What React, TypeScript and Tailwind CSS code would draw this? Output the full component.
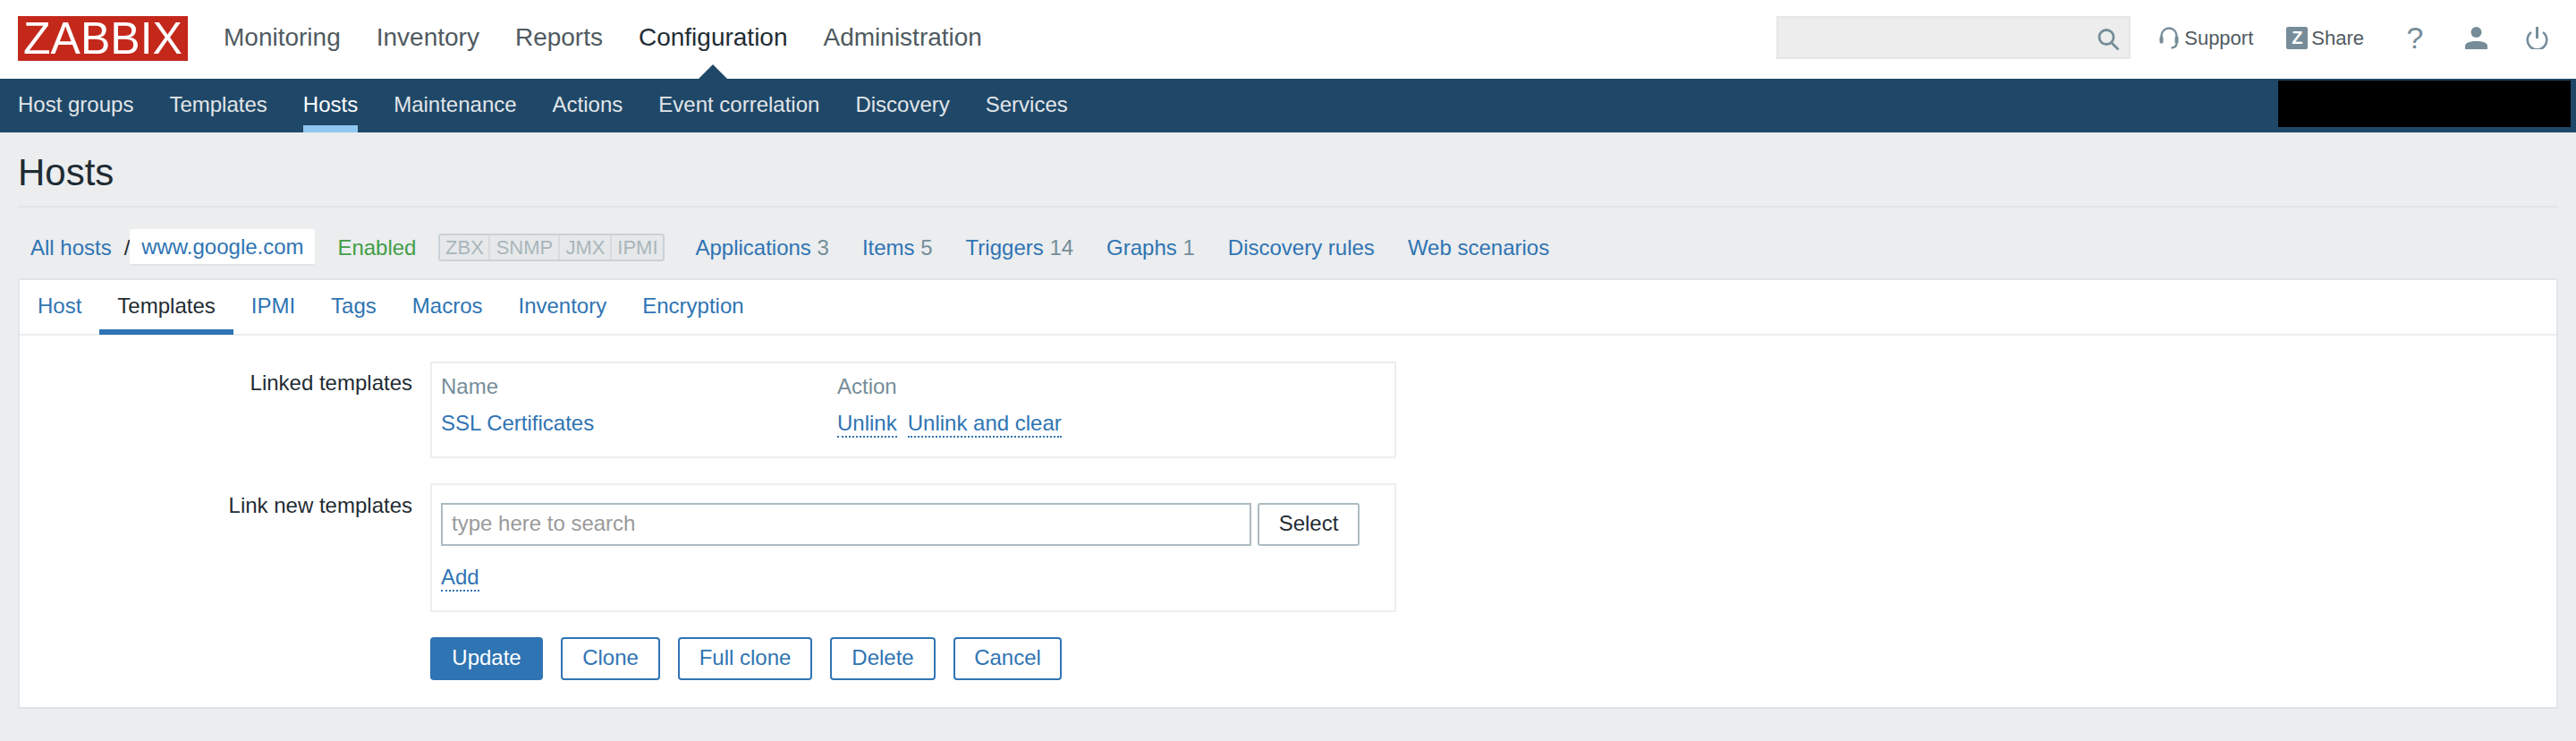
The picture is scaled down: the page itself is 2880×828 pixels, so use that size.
import React from "react";

function DotLink({ children }: { children: React.ReactNode }) {
  return (
    <a className="text-[#2f74b3] border-b-2 border-dotted border-[#2f74b3] leading-[28px] block">{children}</a>
  );
}

function Btn({ w, children }: { w: string; children: React.ReactNode }) {
  return (
    <button className={`${w} h-12 border-2 border-[#2f74b3] rounded-[4px] text-[#2f74b3] bg-white text-center pb-[2px]`}>{children}</button>
  );
}

export default function App() {
  const top = [
    ["Monitoring", false],
    ["Inventory", false],
    ["Reports", false],
    ["Configuration", true],
    ["Administration", false],
  ] as const;
  const sub = ["Host groups", "Templates", "Hosts", "Maintenance", "Actions", "Event correlation", "Discovery", "Services"];
  const tabs = ["Host", "Templates", "IPMI", "Tags", "Macros", "Inventory", "Encryption"];
  return (
    <div className="w-[2880px] h-[828px] bg-[#ebedef] text-[24px] text-[#1f2c33] overflow-hidden font-['Liberation_Sans',Arial,sans-serif]">
      {/* top header */}
      <header className="h-[88px] bg-white flex items-start relative">
        <div className="ml-5 mt-[18px] w-[190px] h-[50px] bg-[#c4281b] text-white text-[50px] leading-[50px] text-center font-normal">ZABBIX</div>
        <nav className="flex ml-10 gap-10 mt-[23px] text-[28px] leading-[38px] text-[#4f5a60]">
          {top.map(([t, a]) => (
            <div key={t} className={`relative ${a ? "text-[#1f2c33]" : ""}`}>
              {t}
              {a && (
                <svg className="absolute left-1/2 -translate-x-1/2 top-[49px]" width="32" height="16" viewBox="0 0 32 16">
                  <path d="M16 0 L32 16 H0 Z" fill="#1f4868" />
                </svg>
              )}
            </div>
          ))}
        </nav>
        <div className="ml-auto flex items-start">
          <div className="mt-[18px] w-[396px] h-12 bg-[#ededed] border-2 border-[#e6e6e6] relative">
            <svg className="absolute right-[10px] top-[12px]" width="25" height="24" viewBox="0 0 25 24" fill="none" stroke="#768d99" strokeWidth="2.8">
              <circle cx="10" cy="9.5" r="8" />
              <path d="M15.5 15.5 L23.5 23.5" />
            </svg>
          </div>
          <div className="ml-[32px] mt-[30px] flex items-center text-[22px] leading-[25px] text-[#4f5a60]">
            <svg width="22" height="25" viewBox="0 0 22 25" fill="none" stroke="#768d99" strokeWidth="2.4">
              <path d="M2.5 12 V10 a8.5 8.5 0 0 1 17 0 V12" />
              <rect x="0.5" y="10.5" width="4" height="8" rx="1.6" fill="#768d99" stroke="none" />
              <rect x="17.5" y="10.5" width="4" height="8" rx="1.6" fill="#768d99" stroke="none" />
              <path d="M19.5 18 C19.5 21.5 17 23.3 13.5 23.5" />
            </svg>
            <span className="ml-[6px]">Support</span>
          </div>
          <div className="ml-[37px] mt-[30px] flex items-center text-[22px] leading-[25px] text-[#4f5a60]">
            <div className="w-6 h-[25px] bg-[#768d99] rounded-[2px] text-white text-[20px] font-bold leading-[25px] text-center">Z</div>
            <span className="ml-1">Share</span>
          </div>
          <div className="ml-[47px] mt-[30px] w-5 text-[#768d99] text-[34px] leading-[25px] text-center">?</div>
          <svg className="ml-[46px] mt-[30px]" width="25" height="25" viewBox="0 0 25 25" fill="#768d99">
            <circle cx="12.5" cy="6" r="6" />
            <path d="M0 25 V21.5 C0 17.5 6 16 12.5 16 C19 16 25 17.5 25 21.5 V25 Z" />
          </svg>
          <svg className="ml-[43px] mt-[30px] mr-[31px]" width="25" height="25" viewBox="0 0 25 25" fill="none" stroke="#768d99" strokeWidth="2.6">
            <path d="M6 6 A10.8 10.8 0 1 0 19 6" />
            <path d="M12.5 0 V13" strokeWidth="3" />
          </svg>
        </div>
      </header>

      {/* sub nav */}
      <nav className="h-[60px] bg-[#1f4868] flex items-start pl-5 relative">
        <div className="flex gap-10 text-[#e2e6e9] leading-[58px] h-full">
          {sub.map((s) => (
            <div key={s} className={`relative ${s === "Hosts" ? "text-white" : ""}`}>
              {s}
              {s === "Hosts" && <div className="absolute left-0 right-0 top-[52px] h-2 bg-[#8fc7f0]" />}
            </div>
          ))}
        </div>
        <div className="absolute right-[6px] top-[2px] w-[327px] h-[52px] bg-black" />
      </nav>

      {/* title */}
      <div className="mx-5 h-[84px] border-b-2 border-[#e1e3e5] text-[42px] leading-[50px] pt-5 text-[#1f2c33]">Hosts</div>

      {/* breadcrumbs */}
      <div className="flex items-center h-[79px] pl-[34px] pt-[10px] leading-7">
        <a className="text-[#2f74b3]">All hosts</a>
        <span className="ml-[14px] text-[#1f2c33]">/</span>
        <a className="h-[41px] w-[207px] bg-white rounded-[3px] border-b-2 border-[#e1e3e5] text-[#2f74b3] text-center leading-[39px]">www.google.com</a>
        <span className="ml-[25px] text-[#429e47]">Enabled</span>
        <div className="ml-[25px] flex h-[31px] border-2 border-[#c9d2d6] rounded-[3px] text-[#a9b6bc] bg-[#e6e8ea] leading-[27px] text-[22px]">
          <span className="w-[56px] text-center border-r-2 border-[#d5dbde]">ZBX</span>
          <span className="w-[78px] text-center border-r-2 border-[#d5dbde]">SNMP</span>
          <span className="w-[58px] text-center border-r-2 border-[#d5dbde]">JMX</span>
          <span className="w-[57px] text-center">IPMI</span>
        </div>
        <a className="ml-[34px] text-[#2f74b3]">Applications <span className="text-[#768d99]">3</span></a>
        <a className="ml-[37px] text-[#2f74b3]">Items <span className="text-[#768d99]">5</span></a>
        <a className="ml-[37px] text-[#2f74b3]">Triggers <span className="text-[#768d99]">14</span></a>
        <a className="ml-[37px] text-[#2f74b3]">Graphs <span className="text-[#768d99]">1</span></a>
        <a className="ml-[37px] text-[#2f74b3]">Discovery rules</a>
        <a className="ml-[37px] text-[#2f74b3]">Web scenarios</a>
      </div>

      {/* panel */}
      <div className="mx-5 h-[481px] bg-white border-2 border-[#e1e5e8]">
        <div className="flex h-[62px] border-b-2 border-[#ebedef]">
          {tabs.map((t) => (
            <div key={t} className={`relative px-5 leading-[57px] ${t === "Templates" ? "text-[#1f2c33]" : "text-[#2f74b3]"}`}>
              {t}
              {t === "Templates" && <div className="absolute left-0 right-0 top-[55px] h-[6px] bg-[#2f74b3]" />}
            </div>
          ))}
        </div>

        <div className="grid grid-cols-[439px_1080px] gap-x-5 mt-[29px]">
          <div className="text-right leading-[28px] pt-[10px]">Linked templates</div>
          <div className="h-[108px] border-2 border-[#ebedef] pl-[10px] pt-3">
            <div className="flex text-[#768d99] leading-[28px]">
              <div className="w-[443px]">Name</div>
              <div>Action</div>
            </div>
            <div className="flex mt-[13px] leading-[28px]">
              <a className="w-[443px] text-[#2f74b3]">SSL Certificates</a>
              <div className="flex items-start gap-3">
                <DotLink>Unlink</DotLink>
                <DotLink>Unlink and clear</DotLink>
              </div>
            </div>
          </div>

          <div className="text-right leading-[28px] mt-7 pt-[11px]">Link new templates</div>
          <div className="mt-7 h-[144px] border-2 border-[#ebedef] pl-[10px] pt-5">
            <div className="flex gap-[7px]">
              <div className="w-[906px] h-12 border-2 border-[#acbbc2] pl-[10px] text-[#9a9a9a] leading-[42px]">type here to search</div>
              <button className="w-[114px] h-12 border-2 border-[#acbbc2] rounded-[3px] text-[#1f2c33] pb-[2px]">Select</button>
            </div>
            <div className="mt-[21px] flex">
              <DotLink>Add</DotLink>
            </div>
          </div>

          <div className="col-start-2 mt-7 flex gap-5">
            <button className="w-[126px] h-12 bg-[#2f74b3] rounded-[4px] text-white pb-[2px]">Update</button>
            <Btn w="w-[111px]">Clone</Btn>
            <Btn w="w-[150px]">Full clone</Btn>
            <Btn w="w-[118px]">Delete</Btn>
            <Btn w="w-[121px]">Cancel</Btn>
          </div>
        </div>
      </div>
    </div>
  );
}
